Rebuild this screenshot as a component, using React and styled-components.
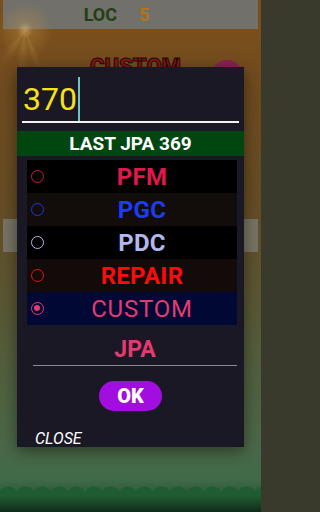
import React, { useState } from 'react'
import styled, { createGlobalStyle } from 'styled-components'

const GlobalStyle = createGlobalStyle`
  html, body { margin: 0; padding: 0; }
  body { font-family: Roboto, "Liberation Sans", sans-serif; background: #3a3a2c; }
`

const options = [
  { key: 'pfm', label: 'PFM', color: '#e0184c', ring: '#d0183f', bg: '#000000', bold: true },
  { key: 'pgc', label: 'PGC', color: '#1c3cf4', ring: '#1f36e6', bg: '#120c0a', bold: true },
  { key: 'pdc', label: 'PDC', color: '#b3b7ec', ring: '#b5b8e2', bg: '#000000', bold: true },
  { key: 'repair', label: 'REPAIR', color: '#ff0a0a', ring: '#f01010', bg: '#120b09', bold: true },
  { key: 'custom', label: 'CUSTOM', color: '#e33a72', ring: '#e33a72', bg: '#000833', bold: false },
]

const App = () => {
  const [value] = useState('370')
  const [picked, setPicked] = useState('custom')

  return (
    <Screen>
      <GlobalStyle />
      <TopBar>
        <LocLabel>LOC</LocLabel>
        <LocValue>5</LocValue>
      </TopBar>
      <Sun />
      <Hero>
        <HeroTitle>CUSTOM</HeroTitle>
        <HeroDot />
      </Hero>
      <SideRow>
        <SideBox />
        <SideBox />
      </SideRow>
      <Grass />

      <Dialog>
        <InputWrap>
          <BigInput>
            {value}
            <Caret />
          </BigInput>
        </InputWrap>
        <LastBar>LAST JPA 369</LastBar>
        <List>
          {options.map((o) => (
            <Row key={o.key} bg={o.bg} onClick={() => setPicked(o.key)}>
              <Radio ring={o.ring} checked={picked === o.key} />
              <RowLabel color={o.color} bold={o.bold}>{o.label}</RowLabel>
            </Row>
          ))}
        </List>
        <JpaField>JPA</JpaField>
        <ButtonRow>
          <OkButton>OK</OkButton>
        </ButtonRow>
        <CloseLink>CLOSE</CloseLink>
      </Dialog>
    </Screen>
  )
}

export default App

const Screen = styled.div`
  position: relative;
  width: 261px;
  height: 512px;
  overflow: hidden;
  display: flex;
  flex-direction: column;
  background: linear-gradient(180deg,
    #7a4f1c 30px,
    #6e4a1f 90px,
    #654c24 200px,
    #5a5532 290px,
    #50603f 380px,
    #4a6848 450px,
    #3f6a48 480px,
    #1c3f24 512px);
`
const TopBar = styled.div`
  margin: 0 3px;
  height: 29px;
  background: #71706a;
  display: flex;
  justify-content: center;
  align-items: center;
  gap: 22px;
  font-weight: 700;
  font-size: 18px;
`
const LocLabel = styled.span`
  color: #233f15;
  margin-left: -28px;
`
const LocValue = styled.span`
  color: #b5741a;
`
const Sun = styled.div`
  position: absolute;
  left: -20px;
  top: 0px;
  width: 100px;
  height: 100px;
  background:
    radial-gradient(circle at 45px 30px, rgba(235,200,130,0.55) 0, rgba(200,150,70,0.3) 8px, rgba(150,100,40,0) 30px),
    conic-gradient(from 150deg at 45px 30px, rgba(220,180,110,0) 0deg, rgba(220,180,110,0.18) 10deg, rgba(220,180,110,0) 20deg, rgba(220,180,110,0.15) 35deg, rgba(220,180,110,0) 50deg, rgba(220,180,110,0.15) 65deg, rgba(220,180,110,0) 80deg, rgba(220,180,110,0) 360deg);
  mask-image: radial-gradient(circle at 45px 30px, #000 0, #000 20px, transparent 45px);
`
const Hero = styled.div`
  display: flex;
  align-items: flex-start;
  margin-top: 27px;
  padding-left: 90px;
  gap: 30px;
`
const HeroTitle = styled.div`
  font-size: 22px;
  font-weight: 900;
  color: #8a1414;
  -webkit-text-stroke: 1px #1a0a08;
  line-height: 22px;
`
const HeroDot = styled.div`
  width: 32px;
  height: 32px;
  border-radius: 50%;
  background: #8a2152;
  margin-top: 4px;
`
const SideRow = styled.div`
  display: flex;
  justify-content: space-between;
  margin: 127px 3px 0;
`
const SideBox = styled.div`
  width: 16px;
  height: 33px;
  background: #767364;
`
const Grass = styled.div`
  margin-top: auto;
  height: 30px;
  background:
    radial-gradient(circle at 50% 100%, #1f5c33 0 9px, transparent 10px) 0 0 / 17px 14px repeat-x,
    radial-gradient(circle at 50% 100%, #256b3b 0 7px, transparent 8px) 6px 2px / 23px 12px repeat-x,
    linear-gradient(180deg, rgba(40,100,60,0) 0, rgba(40,100,60,0) 10px, #1f5a31 14px, #163f24 24px, #0f2a18 30px);
`

const Dialog = styled.div`
  position: absolute;
  left: 17px;
  top: 67px;
  width: 227px;
  height: 380px;
  background: #1a1824;
  box-shadow: 0 4px 14px rgba(0, 0, 0, 0.45);
  display: flex;
  flex-direction: column;
  overflow: hidden;
`
const InputWrap = styled.div`
  margin: 0 5px;
  height: 54px;
  border-bottom: 2px solid #f2f2f2;
  display: flex;
  align-items: flex-end;
`
const BigInput = styled.div`
  position: relative;
  font-size: 32px;
  color: #f6e21a;
  line-height: 44px;
  padding-left: 1px;
  display: flex;
  align-items: flex-end;
`
const Caret = styled.span`
  display: inline-block;
  width: 2px;
  height: 44px;
  background: #6fc7bf;
  margin-left: 1px;
`
const LastBar = styled.div`
  margin-top: 8px;
  height: 25px;
  background: #004610;
  color: #ffffff;
  font-weight: 700;
  font-size: 19px;
  display: flex;
  align-items: center;
  justify-content: center;
`
const List = styled.div`
  margin: 4px 7px 0 10px;
  display: flex;
  flex-direction: column;
`
const Row = styled.div`
  height: 33px;
  background: ${(p) => p.bg};
  display: flex;
  align-items: center;
  cursor: pointer;
`
const Radio = styled.span`
  position: relative;
  box-sizing: border-box;
  width: 13px;
  height: 13px;
  margin-left: 4px;
  margin-right: 3px;
  border-radius: 50%;
  border: 1.5px solid ${(p) => p.ring};
  flex-shrink: 0;
  &::after {
    content: '';
    display: ${(p) => (p.checked ? 'block' : 'none')};
    position: absolute;
    left: 2px;
    top: 2px;
    width: 6px;
    height: 6px;
    border-radius: 50%;
    background: ${(p) => p.ring};
  }
`
const RowLabel = styled.span`
  flex: 1;
  text-align: center;
  color: ${(p) => p.color};
  font-weight: ${(p) => (p.bold ? 700 : 400)};
  font-size: 24px;
  letter-spacing: ${(p) => (p.bold ? '0.3px' : '0.8px')};
`
const JpaField = styled.div`
  margin: 8px 7px 0 16px;
  height: 32px;
  border-bottom: 1.5px solid #8c8a90;
  color: #e33a72;
  font-weight: 700;
  font-size: 23px;
  display: flex;
  align-items: center;
  justify-content: center;
`
const ButtonRow = styled.div`
  display: flex;
  justify-content: center;
  margin-top: 15px;
`
const OkButton = styled.button`
  width: 63px;
  height: 30px;
  border: none;
  border-radius: 15px;
  background: #a20de0;
  color: #ffffff;
  font-family: Roboto, "Liberation Sans", sans-serif;
  font-weight: 900;
  font-size: 20px;
`
const CloseLink = styled.div`
  margin: 20px 0 0 18px;
  color: #ffffff;
  font-style: italic;
  font-size: 16px;
  line-height: 16px;
`
